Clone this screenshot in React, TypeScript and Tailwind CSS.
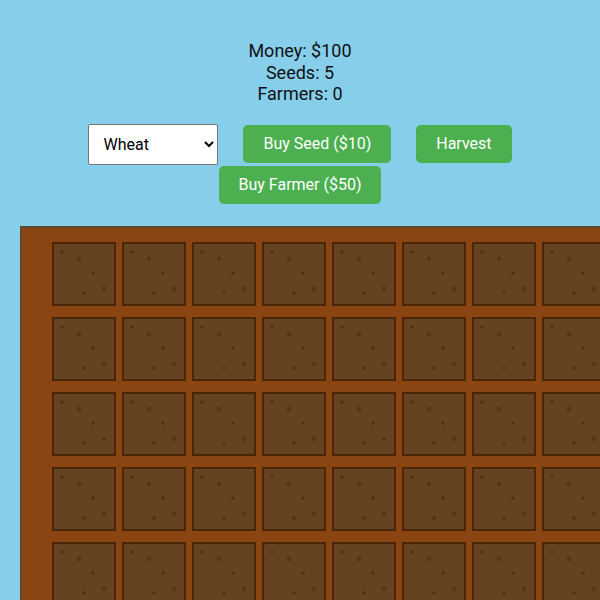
import React, { useState } from 'react';

const ROWS = 10;
const COLS = 10;

function Plot() {
  return (
    <div className="relative w-16 h-16 shrink-0 bg-[#654321] border-2 border-[#4a2508]">
      <svg className="absolute inset-0" width="60" height="60" viewBox="0 0 60 60">
        <circle cx="8" cy="8" r="1.6" fill="#4e2f12" />
        <circle cx="25" cy="15" r="2.4" fill="#573617" />
        <circle cx="39" cy="29" r="1.6" fill="#4e2f12" />
        <circle cx="50" cy="45" r="2.4" fill="#573617" />
        <circle cx="30" cy="49" r="1.6" fill="#4e2f12" />
      </svg>
    </div>
  );
}

export default function App() {
  const [money, setMoney] = useState(100);
  const [seeds, setSeeds] = useState(5);
  const [farmers, setFarmers] = useState(0);
  const [crop, setCrop] = useState('wheat');

  const buySeed = () => {
    if (money >= 10) {
      setMoney(money - 10);
      setSeeds(seeds + 1);
    }
  };

  const buyFarmer = () => {
    if (money >= 50) {
      setMoney(money - 50);
      setFarmers(farmers + 1);
    }
  };

  return (
    <div className="w-full h-screen overflow-hidden bg-[#87CEEB] text-[#111] font-['Roboto',_'Liberation_Sans',_sans-serif]">
      {/* Stats */}
      <div className="pt-[40px] text-center text-[18px] leading-[21.5px]">
        <div>Money: ${money}</div>
        <div>Seeds: {seeds}</div>
        <div>Farmers: {farmers}</div>
      </div>

      {/* Controls */}
      <div className="mt-[19px] mx-auto w-[560px] flex flex-wrap justify-center items-center gap-x-[25px] gap-y-px">
        <select
          value={crop}
          onChange={(e) => setCrop(e.target.value)}
          className="w-[130px] h-[41px] px-2.5 text-[16px] bg-white text-black border border-[#767676] rounded-[2px]"
        >
          <option value="wheat">Wheat</option>
          <option value="corn">Corn</option>
          <option value="carrot">Carrot</option>
        </select>
        <button
          onClick={buySeed}
          className="h-[38px] px-5 text-[16px] text-white bg-[#4CAF50] rounded-[5px]"
        >
          Buy Seed ($10)
        </button>
        <button className="h-[38px] px-5 text-[16px] text-white bg-[#4CAF50] rounded-[5px]">
          Harvest
        </button>
        <button
          onClick={buyFarmer}
          className="h-[38px] px-5 text-[16px] text-white bg-[#4CAF50] rounded-[5px]"
        >
          Buy Farmer ($50)
        </button>
      </div>

      {/* Field */}
      <div className="mt-[22px] ml-5 w-max bg-[#8B4513] border-2 border-[#5b4a2b] pl-[30px] pt-[14px] pr-[30px] pb-[14px]">
        <div className="grid grid-cols-[repeat(10,64px)] gap-x-[6px] gap-y-[11px]">
          {Array.from({ length: ROWS * COLS }).map((_, i) => (
            <Plot key={i} />
          ))}
        </div>
      </div>
    </div>
  );
}
